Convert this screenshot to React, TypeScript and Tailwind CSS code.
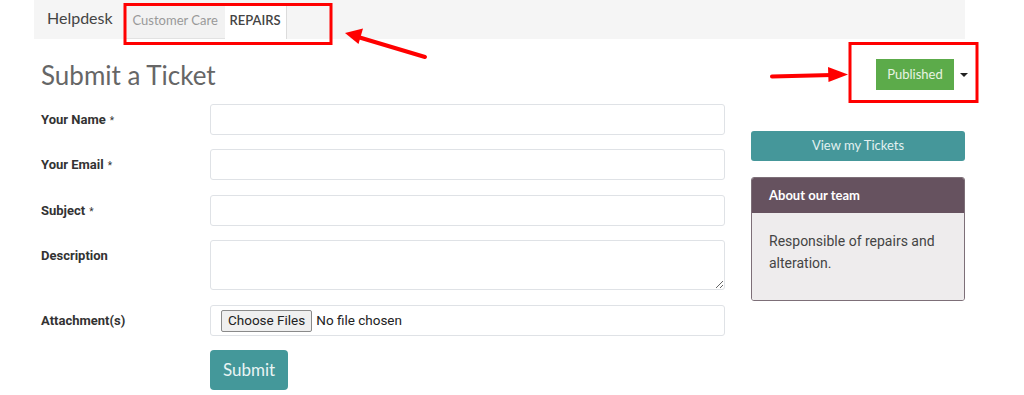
const fields = [
    { label: 'Your Name', required: true, kind: 'input', gap: '' },
    { label: 'Your Email', required: true, kind: 'input', gap: 'mt-[14px]' },
    { label: 'Subject', required: true, kind: 'input', gap: 'mt-[15px]' },
    { label: 'Description', required: false, kind: 'textarea', gap: 'mt-[14px]' },
];

const heading = { fontFamily: 'Lato, "Open Sans", sans-serif' };
const body = { fontFamily: 'Roboto, "Liberation Sans", sans-serif' };

// red call-outs drawn on top of the screenshot
const Annotations = () => (
    <svg className="pointer-events-none absolute inset-0" width="1024" height="395">
        <rect x="125" y="4.5" width="206" height="39" fill="none" stroke="#ff0000" strokeWidth="3" />
        <rect x="850" y="43.5" width="127" height="58" fill="none" stroke="#ff0000" strokeWidth="3" />
        <line x1="425" y1="57" x2="358" y2="37" stroke="#ff0000" strokeWidth="4" strokeLinecap="round" />
        <polygon points="345,33 363,28.5 358.5,44" fill="#ff0000" />
        <line x1="772" y1="76.5" x2="832" y2="75" stroke="#ff0000" strokeWidth="4" strokeLinecap="round" />
        <polygon points="848,74.5 828,67 828.5,82" fill="#ff0000" />
    </svg>
);

export default function App() {
    return (
        <div className="relative h-[395px] w-[1024px] overflow-hidden bg-white">
            <nav className="ml-[34px] flex h-[39px] w-[931px] items-end bg-[#f5f5f5]">
                <span
                    className="mb-[9px] pl-[13px] pr-[13px] text-[16px] text-[#444]"
                    style={heading}
                >
                    Helpdesk
                </span>
                <div className="flex h-[36px] items-stretch text-[13px]" style={heading}>
                    <span className="flex w-[99px] items-center justify-center border-b border-[#e2e2e2] bg-[#f2f2f2] text-[#999]">
                        Customer Care
                    </span>
                    <span className="flex w-[62px] items-center justify-center border-r border-[#dcdcdc] bg-white font-semibold text-[#444]">
                        REPAIRS
                    </span>
                </div>
            </nav>

            <div className="ml-[34px] flex w-[931px] pl-[7px]">
                <div className="w-[684px]">
                    <div className="h-[65px] pt-[19px]">
                        <h1 className="text-[26px] leading-[34px] text-[#666]" style={heading}>
                            Submit a Ticket
                        </h1>
                    </div>

                    <form className="flex flex-col" style={body}>
                        {fields.map((f) => (
                            <div key={f.label} className={`flex items-start ${f.gap}`}>
                                <label className="w-[169px] pt-[6px] text-[13px] font-bold leading-[20px] text-[#333]">
                                    {f.label}
                                    {f.required && <span className="ml-[4px] text-[10px] font-normal">*</span>}
                                </label>
                                {f.kind === 'input' ? (
                                    <input className="h-[31px] w-[515px] rounded-[3px] border border-[#dfe2e6] bg-white" />
                                ) : (
                                    <textarea className="h-[50px] w-[515px] rounded-[3px] border border-[#dfe2e6] bg-white" />
                                )}
                            </div>
                        ))}

                        <div className="mt-[15px] flex items-start">
                            <label className="w-[169px] pt-[6px] text-[13px] font-bold leading-[20px] text-[#333]">
                                Attachment(s)
                            </label>
                            <div className="flex h-[31px] w-[515px] items-center rounded-[3px] border border-[#dfe2e6] bg-white pl-[10px] text-[13.5px] text-[#222]">
                                <span className="flex h-[22px] items-center rounded-[2px] border border-[#8a8a8a] bg-[#efefef] px-[6px]">
                                    Choose Files
                                </span>
                                <span className="ml-[4px]">No file chosen</span>
                            </div>
                        </div>

                        <div className="mt-[14px] flex">
                            <div className="w-[169px]" />
                            <button
                                type="button"
                                className="h-[40px] w-[78px] rounded-[4px] bg-[#44989a] text-[17px] text-[#e9f4f4]"
                                style={heading}
                            >
                                Submit
                            </button>
                        </div>
                    </form>
                </div>

                <aside className="ml-[26px] w-[214px]">
                    <div className="mt-[20px] flex h-[31px] items-center justify-end">
                        <span
                            className="flex h-[31px] w-[78px] items-center justify-center bg-[#5cab4a] text-[13px] text-[#e8f4e2]"
                            style={heading}
                        >
                            Published
                        </span>
                        <span className="ml-[6px] mr-[-3px] h-0 w-0 border-x-[4px] border-t-[4px] border-x-transparent border-t-[#222]" />
                    </div>

                    <button
                        type="button"
                        className="mt-[41px] h-[30px] w-[214px] rounded-[3px] bg-[#45979a] text-[13px] text-[#e2f1f1]"
                        style={heading}
                    >
                        View my Tickets
                    </button>

                    <div className="mt-[16px] overflow-hidden rounded-[3px] border border-[#7d6f78]">
                        <div
                            className="flex h-[35px] items-center bg-[#66525f] pl-[17px] text-[13px] font-bold text-white"
                            style={heading}
                        >
                            About our team
                        </div>
                        <p
                            className="h-[87px] bg-[#eeeced] pl-[17px] pr-[10px] pt-[17px] text-[14px] leading-[22px] text-[#444]"
                            style={body}
                        >
                            Responsible of repairs and alteration.
                        </p>
                    </div>
                </aside>
            </div>

            <Annotations />
        </div>
    );
}
